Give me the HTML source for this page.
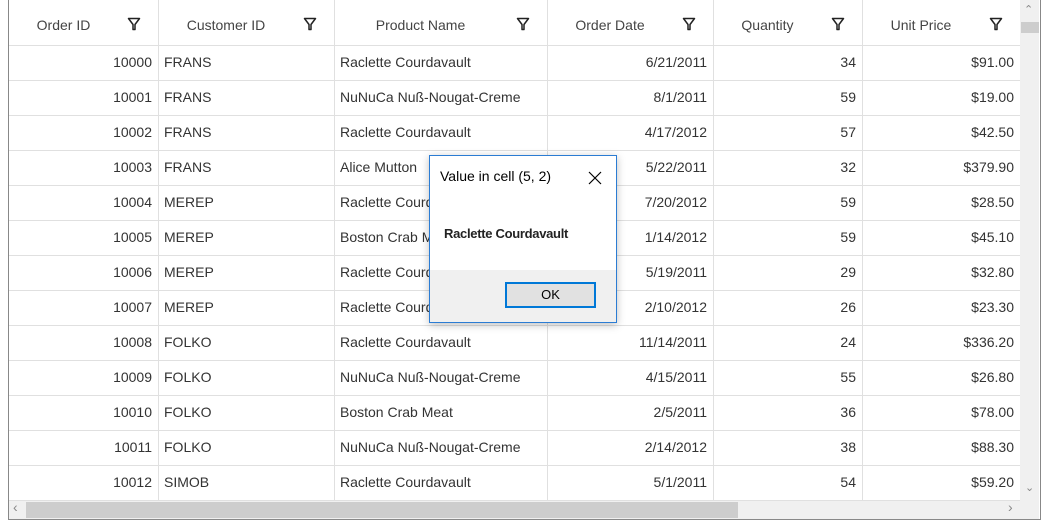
<!DOCTYPE html>
<html><head><style>
body{margin:0;width:1045px;height:523px;background:#fff;font-family:"Segoe UI","Liberation Sans",sans-serif;font-size:14px;color:#333;position:relative;overflow:hidden}
.a{position:absolute}
.grid{left:8px;top:0;width:1031px;height:519px;border:1px solid #888;border-top:none;box-sizing:content-box}
.vl{position:absolute;top:0;width:1px;height:501px;background:#e0e0e0}
.hl{position:absolute;left:9px;width:1011px;height:1px;background:#e0e0e0}
.c{position:absolute;height:35px;line-height:35px;white-space:nowrap;overflow:hidden}
.h{position:absolute;top:0;height:45px;line-height:50px;color:#444}
.r{text-align:right}
</style></head><body>
<div class="a grid"></div>
<div id="g"></div>
<div class="a" style="left:1020px;top:0;width:19px;height:501px;background:#f0f0f0"></div>
<div class="a" style="left:1021px;top:22px;width:18px;height:11px;background:#cdcdcd"></div>
<div class="a" style="left:1024px;top:3px;font-size:11px;color:#888">&#8963;</div>
<div class="a" style="left:1025px;top:481px;font-size:11px;color:#888">&#8964;</div>
<div class="a" style="left:9px;top:501px;width:1030px;height:18px;background:#f0f0f0"></div>
<div class="a" style="left:26px;top:502px;width:712px;height:16px;background:#cdcdcd"></div>
<div class="a" style="left:13px;top:499px;font-size:14px;color:#888">&#8249;</div>
<div class="a" style="left:1008px;top:499px;font-size:14px;color:#888">&#8250;</div>
<div class="a" style="left:429px;top:155px;width:186px;height:166px;border:1px solid #2b7cd3;background:#fff;box-shadow:0 2px 8px rgba(0,0,0,.25)">
 <div class="a" style="left:10px;top:12px;font-size:14px;color:#000">Value in cell (5, 2)</div>
 <svg class="a" style="left:158px;top:15px" width="14" height="14"><path d="M1 1L13 13M13 1L1 13" stroke="#000" stroke-width="1.2"/></svg>
 <div class="a" style="left:14px;top:70px;font-size:13px;font-weight:bold;color:#222;letter-spacing:-0.3px">Raclette Courdavault</div>
 <div class="a" style="left:0;top:114px;width:186px;height:52px;background:#f0f0f0"></div>
 <div class="a" style="left:75px;top:126px;width:91px;height:26px;border:2px solid #0078d7;background:#e1e1e1;box-sizing:border-box;text-align:center;line-height:22px;font-size:13px;color:#000">OK</div>
</div>
<script>
var cols=[9,158,334,547,713,862,1020];
var heads=["Order ID","Customer ID","Product Name","Order Date","Quantity","Unit Price"];
var rows=[
["10000","FRANS","Raclette Courdavault","6/21/2011","34","$91.00"],
["10001","FRANS","NuNuCa Nuß-Nougat-Creme","8/1/2011","59","$19.00"],
["10002","FRANS","Raclette Courdavault","4/17/2012","57","$42.50"],
["10003","FRANS","Alice Mutton","5/22/2011","32","$379.90"],
["10004","MEREP","Raclette Courdavault","7/20/2012","59","$28.50"],
["10005","MEREP","Boston Crab Meat","1/14/2012","59","$45.10"],
["10006","MEREP","Raclette Courdavault","5/19/2011","29","$32.80"],
["10007","MEREP","Raclette Courdavault","2/10/2012","26","$23.30"],
["10008","FOLKO","Raclette Courdavault","11/14/2011","24","$336.20"],
["10009","FOLKO","NuNuCa Nuß-Nougat-Creme","4/15/2011","55","$26.80"],
["10010","FOLKO","Boston Crab Meat","2/5/2011","36","$78.00"],
["10011","FOLKO","NuNuCa Nuß-Nougat-Creme","2/14/2012","38","$88.30"],
["10012","SIMOB","Raclette Courdavault","5/1/2011","54","$59.20"]];
var h="";
for(var i=1;i<6;i++)h+='<div class="vl" style="left:'+cols[i]+'px"></div>';
h+='<div class="hl" style="top:45px"></div>';
for(var r=0;r<13;r++)h+='<div class="hl" style="top:'+(80+r*35)+'px"></div>';
for(var i=0;i<6;i++){var x=cols[i],w=cols[i+1]-x;
 h+='<div class="h" style="left:'+x+'px;width:'+(w-40)+'px;text-align:center;top:0;height:45px;line-height:50px">'+heads[i]+'</div>';
 h+='<svg class="a" style="left:'+(cols[i+1]-31)+'px;top:17px" width="14" height="14"><path d="M1.5 1.5H12.5L8 7.5V12.5H6V7.5Z" fill="none" stroke="#222" stroke-width="1.5" stroke-linejoin="round"/></svg>';}
var right=[1,0,0,1,1,1];
for(var r=0;r<13;r++){var y=45+r*35;
 for(var i=0;i<6;i++){var x=cols[i],w=cols[i+1]-x;
  h+='<div class="c'+(right[i]?' r':'')+'" style="top:'+y+'px;left:'+(x+6)+'px;width:'+(w-12)+'px">'+rows[r][i]+'</div>';}}
document.getElementById('g').innerHTML=h;
</script>
</body></html>
